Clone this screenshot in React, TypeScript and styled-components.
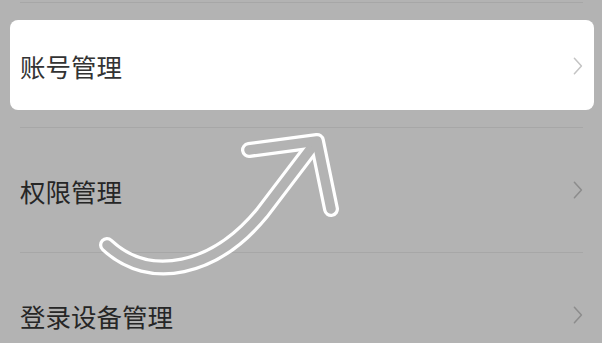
import React from 'react';
import styled, {createGlobalStyle} from 'styled-components';

const overlay = {
  page: '#b3b3b3',
  divider: '#a7a7a7',
  text: '#262626',
  chevron: '#8c8c8c',
};

const GlobalStyle = createGlobalStyle`
  html, body {
    margin: 0;
    padding: 0;
    background: ${overlay.page};
  }
  body {
    font-family: 'Noto Sans CJK SC', 'Noto Sans', sans-serif;
  }
`;

const Page = styled.div`
  position: relative;
  width: 602px;
  height: 343px;
  overflow: hidden;
  box-sizing: border-box;
  padding: 2px 19px 0 20px;
  background: ${overlay.page};
`;

const List = styled.ul`
  list-style: none;
  margin: 0;
  padding: 0;
`;

const Item = styled.li<{$highlighted?: boolean}>`
  box-sizing: border-box;
  height: 125px;
  border-top: 1px solid ${overlay.divider};
  padding: ${({$highlighted}) => ($highlighted ? '17px 0' : '0')};
`;

const ItemBody = styled.div<{$highlighted?: boolean}>`
  display: flex;
  align-items: center;
  justify-content: space-between;
  height: 100%;
  box-sizing: border-box;
  ${({$highlighted}) =>
    $highlighted &&
    `
    margin: 0 -11px 0 -10px;
    padding: 1px 11px 0 10px;
    background: #ffffff;
    border-radius: 8px;
  `}
`;

const Label = styled.span<{$highlighted?: boolean}>`
  font-size: 25.5px;
  color: ${({$highlighted}) => ($highlighted ? '#333333' : overlay.text)};
`;

const Chevron = styled.svg`
  display: block;
  width: 10px;
  height: 18px;
`;

const ArrowLayer = styled.svg`
  position: absolute;
  left: 0;
  top: 0;
  width: 602px;
  height: 343px;
  pointer-events: none;
`;

const items = [
  {label: '账号管理', highlighted: true},
  {label: '权限管理'},
  {label: '登录设备管理'},
];

const ChevronIcon = ({color}: {color: string}) => (
  <Chevron viewBox="0 0 10 18">
    <polyline
      points="1.4,1.2 8.4,9 1.4,16.8"
      fill="none"
      stroke={color}
      strokeWidth="1.5"
      strokeLinecap="round"
      strokeLinejoin="round"
    />
  </Chevron>
);

// curved shaft, then the two arms of the head
const arrowPaths = [
  'M107 245 C150 285, 215 270, 262 213 L316 142',
  'M249 150 L317 141 L331 209',
];

const Arrow = () => (
  <ArrowLayer viewBox="0 0 602 343">
    {arrowPaths.map((d) => (
      <path
        key={`o-${d}`}
        d={d}
        fill="none"
        stroke="#ffffff"
        strokeWidth="16"
        strokeLinecap="round"
        strokeLinejoin="round"
      />
    ))}
    {arrowPaths.map((d) => (
      <path
        key={`i-${d}`}
        d={d}
        fill="none"
        stroke={overlay.page}
        strokeWidth="9.5"
        strokeLinecap="round"
        strokeLinejoin="round"
      />
    ))}
  </ArrowLayer>
);

export default function App() {
  return (
    <>
      <GlobalStyle />
      <Page>
        <List>
          {items.map((item) => (
            <Item key={item.label} $highlighted={item.highlighted}>
              <ItemBody $highlighted={item.highlighted}>
                <Label $highlighted={item.highlighted}>{item.label}</Label>
                <ChevronIcon color={item.highlighted ? '#c4c4c4' : overlay.chevron} />
              </ItemBody>
            </Item>
          ))}
        </List>
        <Arrow />
      </Page>
    </>
  );
}
